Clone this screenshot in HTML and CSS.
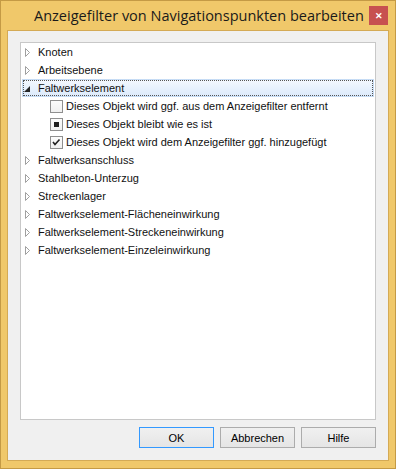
FILE: index.html
```html
<!DOCTYPE html>
<html lang="de">
<head>
    <meta charset="UTF-8">
    <title>Anzeigefilter von Navigationspunkten bearbeiten</title>
    <link rel="stylesheet" href="styles.css">
</head>
<body>

    <div class="window">
        <div class="titlebar">
            <span class="title">Anzeigefilter von Navigationspunkten bearbeiten</span>
            <span class="close">&#x2715;</span>
        </div>

        <div class="client">
            <div class="tree">
                <div class="row">
                    <svg class="arrow" width="7" height="9" viewBox="0 0 7 9"><path d="M1.5 0.5 L5.5 4.5 L1.5 8.5 Z" fill="#fff" stroke="#a0a0a0"/></svg>
                    <span>Knoten</span>
                </div>
                <div class="row">
                    <svg class="arrow" width="7" height="9" viewBox="0 0 7 9"><path d="M1.5 0.5 L5.5 4.5 L1.5 8.5 Z" fill="#fff" stroke="#a0a0a0"/></svg>
                    <span>Arbeitsebene</span>
                </div>
                <div class="row selected">
                    <svg class="arrow" width="7" height="9" viewBox="0 0 7 9"><path d="M0 8 L6 2 L6 8 Z" fill="#262626"/></svg>
                    <span>Faltwerkselement</span>
                </div>
                <div class="row child">
                    <span class="check"></span>
                    <span>Dieses Objekt wird ggf. aus dem Anzeigefilter entfernt</span>
                </div>
                <div class="row child">
                    <span class="check"><span class="dot"></span></span>
                    <span>Dieses Objekt bleibt wie es ist</span>
                </div>
                <div class="row child">
                    <span class="check">
                        <svg width="11" height="11" viewBox="0 0 11 11"><path d="M2 5 L4 7.5 L8.5 2.5" fill="none" stroke="#222" stroke-width="1.6"/></svg>
                    </span>
                    <span>Dieses Objekt wird dem Anzeigefilter ggf. hinzugefügt</span>
                </div>
                <div class="row">
                    <svg class="arrow" width="7" height="9" viewBox="0 0 7 9"><path d="M1.5 0.5 L5.5 4.5 L1.5 8.5 Z" fill="#fff" stroke="#a0a0a0"/></svg>
                    <span>Faltwerksanschluss</span>
                </div>
                <div class="row">
                    <svg class="arrow" width="7" height="9" viewBox="0 0 7 9"><path d="M1.5 0.5 L5.5 4.5 L1.5 8.5 Z" fill="#fff" stroke="#a0a0a0"/></svg>
                    <span>Stahlbeton-Unterzug</span>
                </div>
                <div class="row">
                    <svg class="arrow" width="7" height="9" viewBox="0 0 7 9"><path d="M1.5 0.5 L5.5 4.5 L1.5 8.5 Z" fill="#fff" stroke="#a0a0a0"/></svg>
                    <span>Streckenlager</span>
                </div>
                <div class="row">
                    <svg class="arrow" width="7" height="9" viewBox="0 0 7 9"><path d="M1.5 0.5 L5.5 4.5 L1.5 8.5 Z" fill="#fff" stroke="#a0a0a0"/></svg>
                    <span>Faltwerkselement-Flächeneinwirkung</span>
                </div>
                <div class="row">
                    <svg class="arrow" width="7" height="9" viewBox="0 0 7 9"><path d="M1.5 0.5 L5.5 4.5 L1.5 8.5 Z" fill="#fff" stroke="#a0a0a0"/></svg>
                    <span>Faltwerkselement-Streckeneinwirkung</span>
                </div>
                <div class="row">
                    <svg class="arrow" width="7" height="9" viewBox="0 0 7 9"><path d="M1.5 0.5 L5.5 4.5 L1.5 8.5 Z" fill="#fff" stroke="#a0a0a0"/></svg>
                    <span>Faltwerkselement-Einzeleinwirkung</span>
                </div>
            </div>

            <div class="buttons">
                <button class="default">OK</button>
                <button>Abbrechen</button>
                <button>Hilfe</button>
            </div>
        </div>
    </div>

</body>
</html>
```

FILE: styles.css
```css
* {
    margin: 0;
    padding: 0;
    box-sizing: border-box;
}

body {
    font-family: 'Liberation Sans', Arial, sans-serif;
    font-size: 11px;
    color: #000;
    background: #fff;
}

/* Dialog frame */
.window {
    width: 396px;
    height: 469px;
    background: #f0c86a;
    border: 1px solid #c49a45;
    padding: 0 6px 7px 6px;
    display: flex;
    flex-direction: column;
}

.titlebar {
    height: 29px;
    display: flex;
    align-items: center;
    position: relative;
}

.title {
    font-family: 'Open Sans', sans-serif;
    font-size: 14.5px;
    color: #1a1a1a;
    margin-left: 27px;
    margin-top: -1px;
}

.close {
    position: absolute;
    right: 1px;
    top: 5px;
    width: 19px;
    height: 19px;
    background: #c75050;
    color: #fff;
    font-size: 9px;
    font-weight: bold;
    display: flex;
    align-items: center;
    justify-content: center;
}

.client {
    flex: 1;
    background: #f0f0f0;
    border: 1px solid #d4aa55;
    padding: 11px 12px 12px 12px;
    display: flex;
    flex-direction: column;
}

/* Tree view */
.tree {
    height: 378px;
    background: #fff;
    border: 1px solid #c8c8c8;
}

.row {
    height: 18px;
    display: flex;
    align-items: center;
    padding-left: 2px;
    margin: 0 1px;
    color: #111;
}

.row .arrow {
    margin-right: 7px;
}

.row.selected {
    background: linear-gradient(#f3f8fe, #dceafb);
    border: 1px solid #c6dcf5;
    outline: 1px dotted #555;
    outline-offset: -2px;
    padding-left: 1px;
}

.row.child {
    padding-left: 28px;
}

.check {
    width: 13px;
    height: 13px;
    border: 1px solid #8f8f8f;
    background: linear-gradient(#fcfcfc, #f0f0f0);
    margin-right: 3px;
    display: flex;
    align-items: center;
    justify-content: center;
}

.check .dot {
    width: 5px;
    height: 5px;
    background: #1e1e1e;
}

/* Dialog buttons */
.buttons {
    margin-top: 7px;
    display: flex;
    justify-content: flex-end;
    gap: 6px;
}

button {
    width: 75px;
    height: 21px;
    font-family: 'Liberation Sans', Arial, sans-serif;
    font-size: 11px;
    color: #000;
    background: linear-gradient(#f0f0f0, #e5e5e5);
    border: 1px solid #acacac;
}

button.default {
    border-color: #3399ff;
}
```
